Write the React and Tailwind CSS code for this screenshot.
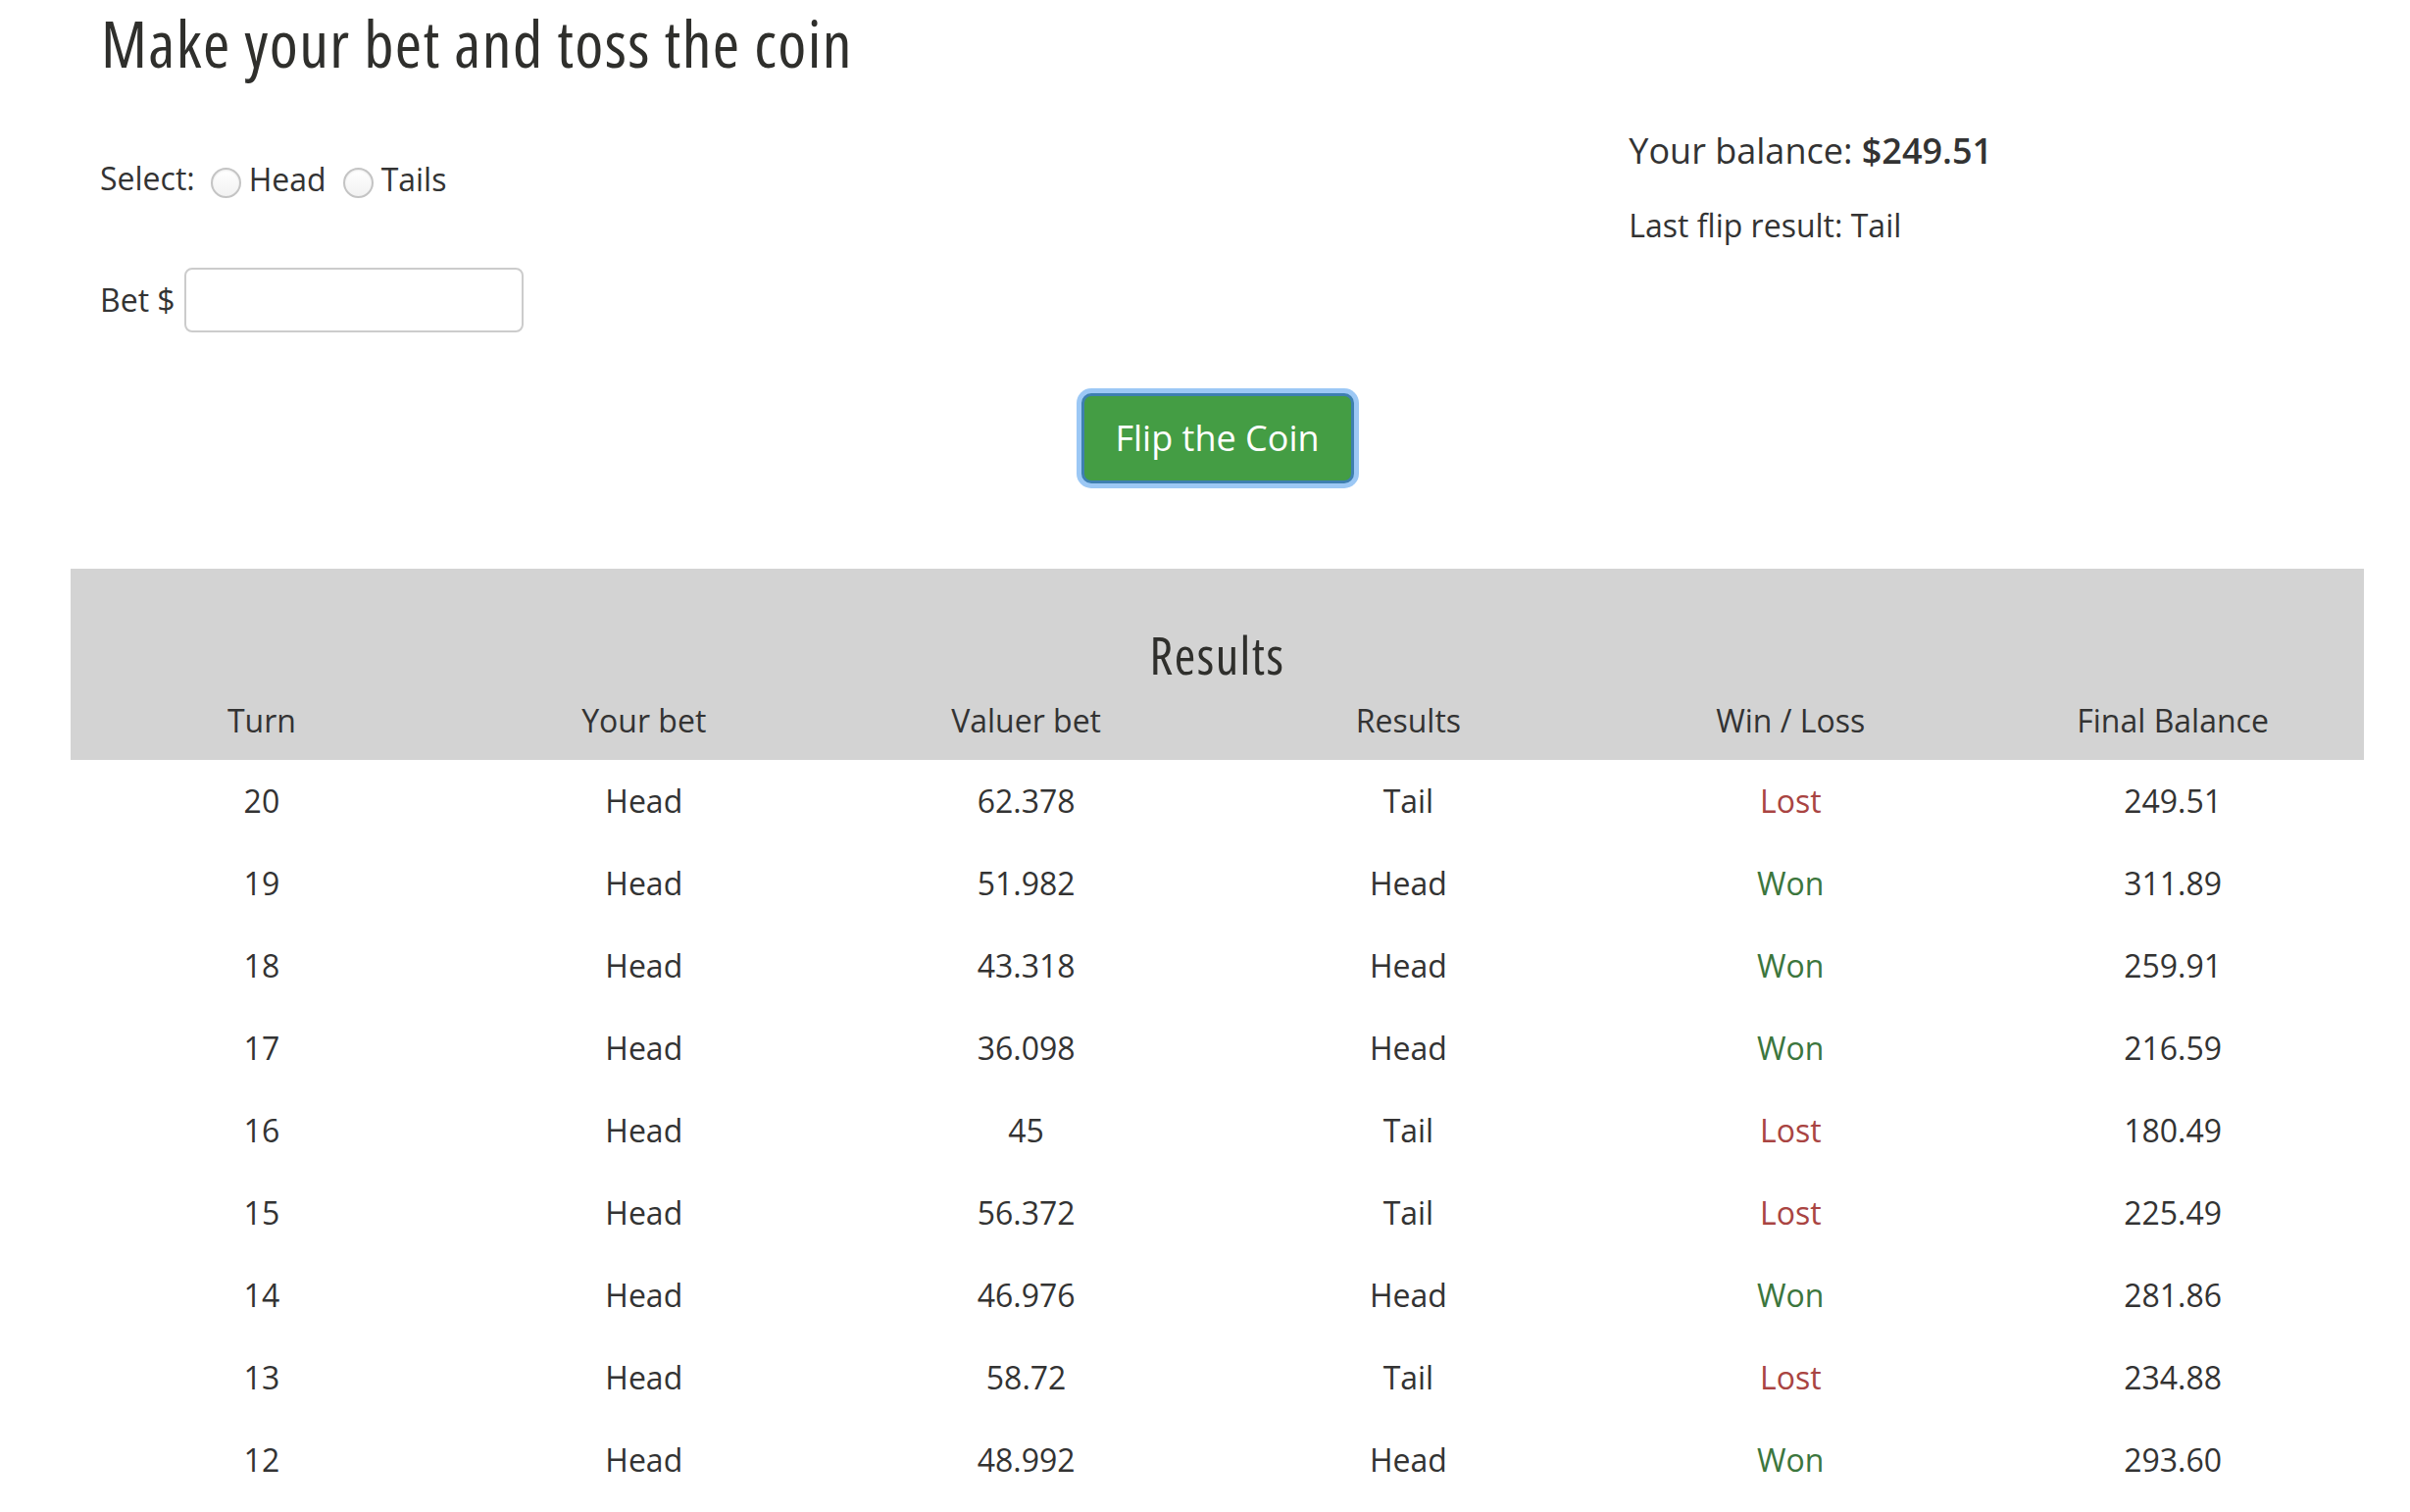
import React from 'react';

// Historial de tiradas
const rows = [
  { turn: 20, bet: 'Head', value: '62.378', result: 'Tail', outcome: 'Lost', balance: '249.51' },
  { turn: 19, bet: 'Head', value: '51.982', result: 'Head', outcome: 'Won', balance: '311.89' },
  { turn: 18, bet: 'Head', value: '43.318', result: 'Head', outcome: 'Won', balance: '259.91' },
  { turn: 17, bet: 'Head', value: '36.098', result: 'Head', outcome: 'Won', balance: '216.59' },
  { turn: 16, bet: 'Head', value: '45', result: 'Tail', outcome: 'Lost', balance: '180.49' },
  { turn: 15, bet: 'Head', value: '56.372', result: 'Tail', outcome: 'Lost', balance: '225.49' },
  { turn: 14, bet: 'Head', value: '46.976', result: 'Head', outcome: 'Won', balance: '281.86' },
  { turn: 13, bet: 'Head', value: '58.72', result: 'Tail', outcome: 'Lost', balance: '234.88' },
  { turn: 12, bet: 'Head', value: '48.992', result: 'Head', outcome: 'Won', balance: '293.60' },
];

const headers = ['Turn', 'Your bet', 'Valuer bet', 'Results', 'Win / Loss', 'Final Balance'];

const Radio = ({ label }) => (
  <label className="flex items-center gap-[8px]">
    <span className="mt-[6px] w-[31px] h-[31px] rounded-full border-2 border-[#c4c4c4] bg-gradient-to-b from-white to-[#f2f2f2] shadow-[inset_0_1px_2px_rgba(0,0,0,0.08)]" />
    <span>{label}</span>
  </label>
);

export default function App() {
  return (
    <div className="min-h-screen bg-white pl-[72px] pr-[47px] text-[#333] text-[32px] font-['Open_Sans',sans-serif]">
      <h1 className="mt-[10px] pl-[31px] text-[66px] leading-none font-normal tracking-[1.4px] font-stretch-[75%] text-[#2f2f2c]">
        Make your bet and toss the coin
      </h1>

      <div className="grid grid-cols-[2fr_1fr]">
        <div className="pl-[30px]">
          <div className="mt-[85px] flex items-center leading-[44px]">
            <span className="mr-[16px] -mt-[2px]">Select:</span>
            <Radio label="Head" />
            <span className="w-[17px]" />
            <Radio label="Tails" />
          </div>
          <div className="mt-[68px] flex items-center gap-[9px]">
            <span>Bet $</span>
            <div className="w-[346px] h-[66px] rounded-[8px] border-2 border-[#cccccc] bg-white" />
          </div>
        </div>
        <div className="pl-[30px]">
          <div className="mt-[58px] text-[36px] leading-[40px]">
            Your balance: <span className="font-semibold">$249.51</span>
          </div>
          <div className="mt-[36px] leading-[40px]">Last flip result: Tail</div>
        </div>
      </div>

      <div className="mt-[62px] flex justify-center">
        <button className="w-[278px] h-[92px] rounded-[10px] border-[3px] border-[#3e7fb0] bg-[#449d44] text-white text-[36px] ring-[5px] ring-[#9cc8f5] focus:outline-none">
          Flip the Coin
        </button>
      </div>

      <div className="mt-[87px]">
        <div className="bg-[#d3d3d3] pt-[60px] pb-[20px]">
          <div className="text-center text-[52px] leading-[55px] tracking-[1.5px] font-stretch-[75%] text-[#2f2f2c]">Results</div>
          <div className="mt-[20px] grid grid-cols-6 leading-[40px]">
            {headers.map((h) => (
              <div key={h} className="text-center">{h}</div>
            ))}
          </div>
        </div>
        <div>
          {rows.map((r) => (
            <div key={r.turn} className="grid grid-cols-6 h-[84px] items-center text-center">
              <div>{r.turn}</div>
              <div>{r.bet}</div>
              <div>{r.value}</div>
              <div>{r.result}</div>
              <div className={r.outcome === 'Won' ? 'text-[#3c763d]' : 'text-[#a94442]'}>{r.outcome}</div>
              <div>{r.balance}</div>
            </div>
          ))}
        </div>
      </div>
    </div>
  );
}
